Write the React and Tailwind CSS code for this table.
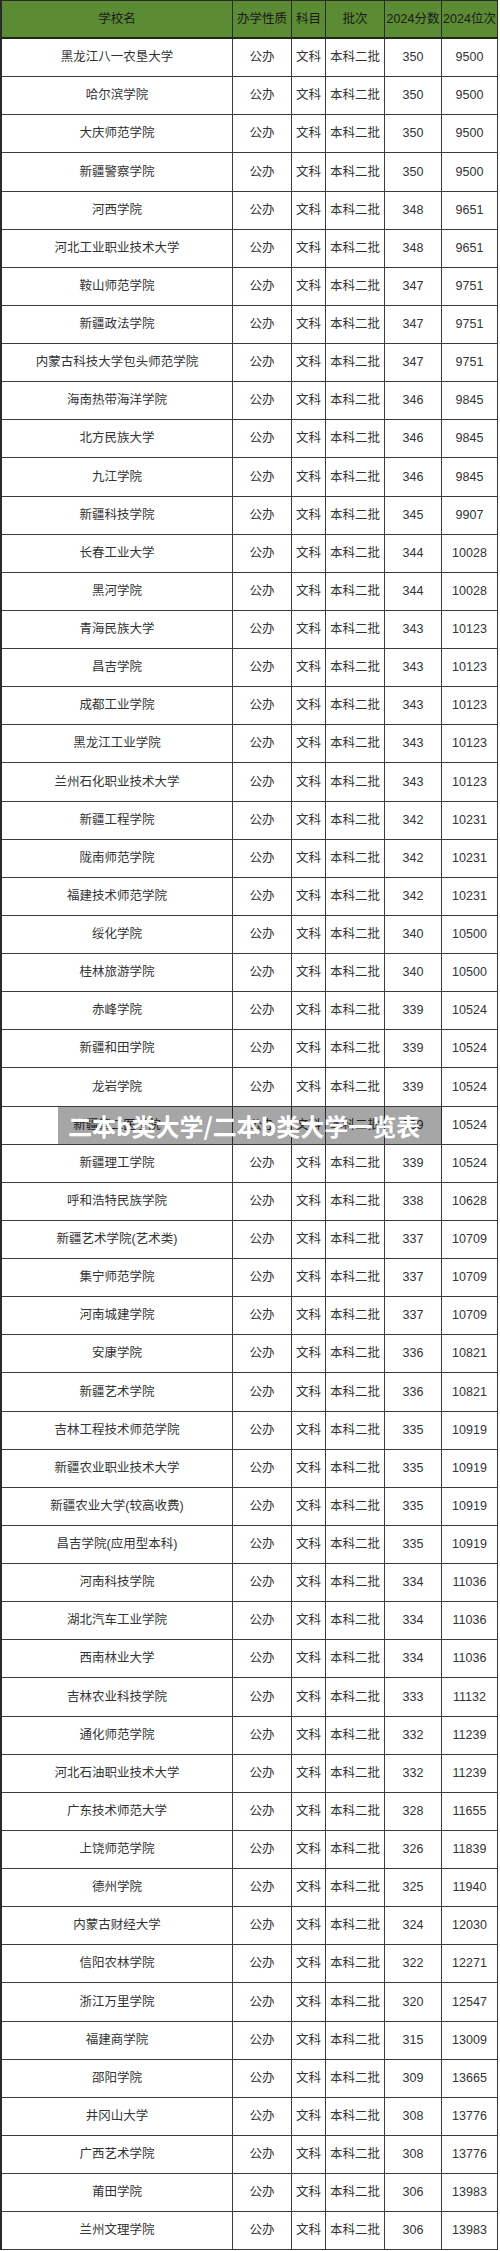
import React from "react";

const rows = [
  ["黑龙江八一农垦大学", 350, 9500],
  ["哈尔滨学院", 350, 9500],
  ["大庆师范学院", 350, 9500],
  ["新疆警察学院", 350, 9500],
  ["河西学院", 348, 9651],
  ["河北工业职业技术大学", 348, 9651],
  ["鞍山师范学院", 347, 9751],
  ["新疆政法学院", 347, 9751],
  ["内蒙古科技大学包头师范学院", 347, 9751],
  ["海南热带海洋学院", 346, 9845],
  ["北方民族大学", 346, 9845],
  ["九江学院", 346, 9845],
  ["新疆科技学院", 345, 9907],
  ["长春工业大学", 344, 10028],
  ["黑河学院", 344, 10028],
  ["青海民族大学", 343, 10123],
  ["昌吉学院", 343, 10123],
  ["成都工业学院", 343, 10123],
  ["黑龙江工业学院", 343, 10123],
  ["兰州石化职业技术大学", 343, 10123],
  ["新疆工程学院", 342, 10231],
  ["陇南师范学院", 342, 10231],
  ["福建技术师范学院", 342, 10231],
  ["绥化学院", 340, 10500],
  ["桂林旅游学院", 340, 10500],
  ["赤峰学院", 339, 10524],
  ["新疆和田学院", 339, 10524],
  ["龙岩学院", 339, 10524],
  ["新疆第二医学院", 339, 10524],
  ["新疆理工学院", 339, 10524],
  ["呼和浩特民族学院", 338, 10628],
  ["新疆艺术学院(艺术类)", 337, 10709],
  ["集宁师范学院", 337, 10709],
  ["河南城建学院", 337, 10709],
  ["安康学院", 336, 10821],
  ["新疆艺术学院", 336, 10821],
  ["吉林工程技术师范学院", 335, 10919],
  ["新疆农业职业技术大学", 335, 10919],
  ["新疆农业大学(较高收费)", 335, 10919],
  ["昌吉学院(应用型本科)", 335, 10919],
  ["河南科技学院", 334, 11036],
  ["湖北汽车工业学院", 334, 11036],
  ["西南林业大学", 334, 11036],
  ["吉林农业科技学院", 333, 11132],
  ["通化师范学院", 332, 11239],
  ["河北石油职业技术大学", 332, 11239],
  ["广东技术师范大学", 328, 11655],
  ["上饶师范学院", 326, 11839],
  ["德州学院", 325, 11940],
  ["内蒙古财经大学", 324, 12030],
  ["信阳农林学院", 322, 12271],
  ["浙江万里学院", 320, 12547],
  ["福建商学院", 315, 13009],
  ["邵阳学院", 309, 13665],
  ["井冈山大学", 308, 13776],
  ["广西艺术学院", 308, 13776],
  ["莆田学院", 306, 13983],
  ["兰州文理学院", 306, 13983],
];

const font = {
  fontFamily: '"Liberation Sans", "Noto Sans CJK SC", sans-serif',
};

const headCell =
  "flex items-center justify-center border-r border-[#2a2a2a] text-[12.5px] text-[#1a1a1a] whitespace-nowrap";
const cell =
  "flex items-center justify-center border-r border-b border-[#3c3c3c] text-[12.5px] text-[#333333] whitespace-nowrap";

export default function App() {
  return (
    <div className="w-[500px] h-[2251px] bg-white overflow-hidden" style={font}>
      <div className="relative w-[498px] border-l-2 border-t border-[#2a2a2a]">
        <div className="grid grid-cols-[231px_59px_34px_59px_57px_56px] h-[38px] bg-[#5b8b33] border-b-2 border-[#1e2a14]">
          <div className={headCell}>学校名</div>
          <div className={headCell}>办学性质</div>
          <div className={headCell}>科目</div>
          <div className={headCell}>批次</div>
          <div className={headCell}>2024分数</div>
          <div className={headCell}>2024位次</div>
        </div>
        {rows.map(([name, score, rank], i) => (
          <div
            key={i}
            className="grid grid-cols-[231px_59px_34px_59px_57px_56px] h-[38.14px]"
          >
            <div className={cell}>{name}</div>
            <div className={cell}>公办</div>
            <div className={cell}>文科</div>
            <div className={cell}>本科二批</div>
            <div className={cell}>{score}</div>
            <div className={cell}>{rank}</div>
          </div>
        ))}
        <div className="absolute left-[56px] top-[1106px] w-[384px] h-[37px] bg-black/35 flex items-center pl-[10px]">
          <span
            className="text-white font-bold text-[24px] leading-none whitespace-nowrap"
            style={{ fontFamily: '"Noto Sans CJK SC", "Liberation Sans", sans-serif' }}
          >
            二本b类大学/二本b类大学一览表
          </span>
        </div>
      </div>
    </div>
  );
}
